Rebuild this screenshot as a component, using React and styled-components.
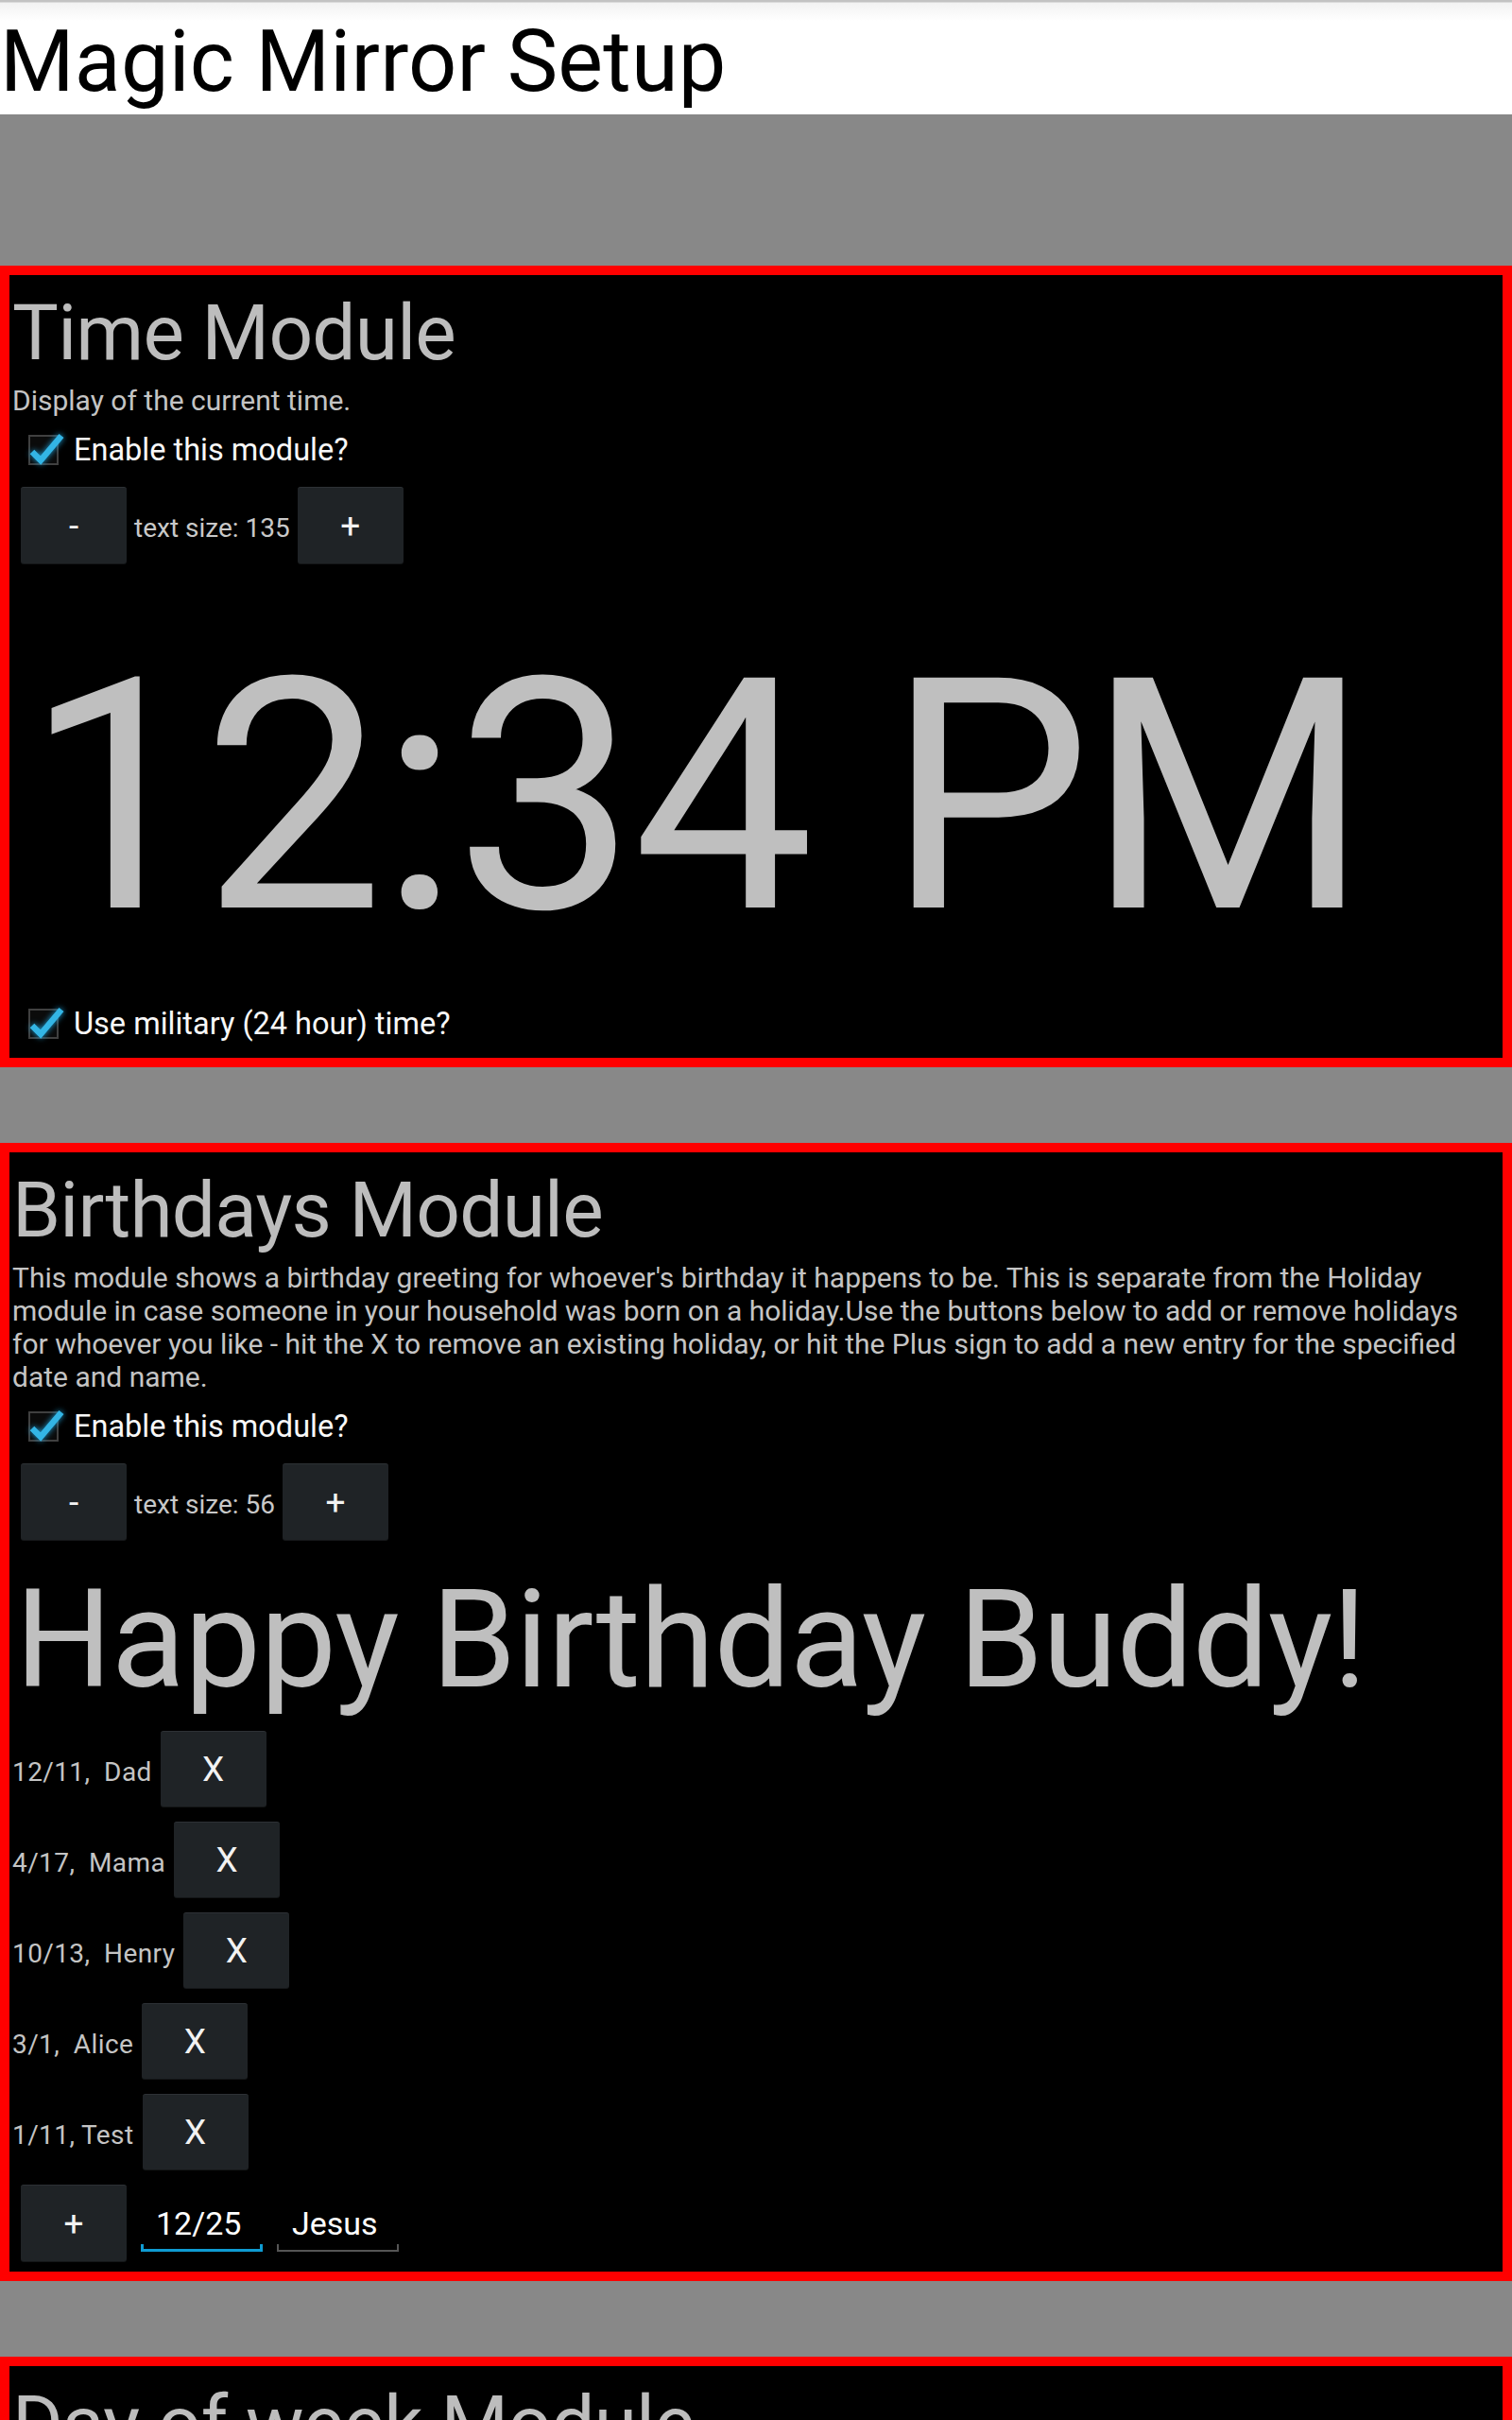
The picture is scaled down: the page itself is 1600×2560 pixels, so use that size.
import React, { useState } from "react";
import styled, { createGlobalStyle } from "styled-components";

const birthdays = [
  { date: "12/11", name: "Dad", sep: ",  " },
  { date: "4/17", name: "Mama", sep: ",  " },
  { date: "10/13", name: "Henry", sep: ",  " },
  { date: "3/1", name: "Alice", sep: ",  " },
  { date: "1/11", name: "Test", sep: ", " },
];

const GlobalStyle = createGlobalStyle`
  body {
    margin: 0;
    background: #888888;
    font-family: Roboto, "Noto Sans", sans-serif;
  }
`;

const Header = styled.header`
  height: 121px;
  box-sizing: border-box;
  padding-top: 13px;
  background: linear-gradient(#c2c2c2 0, #c2c2c2 2px, #f2f2f2 3px, #ffffff 22px);
`;

const Heading = styled.h1`
  margin: 0;
  font-size: 90px;
  font-weight: 400;
  line-height: normal;
  letter-spacing: 0.2px;
  color: #000;
`;

const Main = styled.main`
  display: flex;
  flex-direction: column;
  gap: 80px;
  padding-top: 160px;
`;

const Module = styled.section`
  border: 10px solid #ff0000;
  background: #000;
  padding: 0 3px ${(p) => p.$padBottom || 0}px;
`;

const Title = styled.h2`
  margin: 13px 0 0;
  font-size: 82px;
  font-weight: 400;
  line-height: normal;
  letter-spacing: -0.8px;
  color: #bdbdbd;
`;

const Desc = styled.p`
  margin: 6px 0 0;
  font-size: 30px;
  line-height: normal;
  color: #c4c4c4;
`;

const CheckRow = styled.label`
  display: flex;
  align-items: center;
  gap: 16px;
  margin-top: ${(p) => p.$mt}px;
  padding-left: 17px;
  font-size: 32.5px;
  line-height: normal;
  color: #f8f8f8;
`;

const CheckIcon = styled.svg`
  width: 32px;
  height: 32px;
  overflow: visible;
  flex: none;
`;

const ButtonRow = styled.div`
  display: flex;
  align-items: center;
  gap: ${(p) => p.$gap || 8}px;
  margin-top: ${(p) => p.$mt || 0}px;
  padding-left: 9px;
`;

const Button = styled.button`
  width: 112px;
  height: ${(p) => p.$h || 81}px;
  padding: 0;
  border: none;
  border-top: 1px solid #2d3135;
  border-radius: 3px;
  background: #1f2326;
  box-shadow: 0 1px 0 #141618;
  color: #f2f2f2;
  font-family: Roboto, sans-serif;
  font-size: 37px;
  flex: none;
`;

const SizeLabel = styled.span`
  padding-top: 6px;
  font-size: 28px;
  color: #c8c8c8;
`;

const Clock = styled.div`
  margin-top: 47px;
  padding-left: 13px;
  font-size: 342px;
  line-height: normal;
  letter-spacing: -4px;
  white-space: nowrap;
  color: #bfbfbf;
`;

const Greeting = styled.div`
  margin-top: 21px;
  padding-left: 3px;
  font-size: 144px;
  line-height: normal;
  letter-spacing: -0.9px;
  white-space: nowrap;
  color: #bfbfbf;
`;

const List = styled.div`
  display: flex;
  flex-direction: column;
  gap: 16px;
  margin-top: 12px;
`;

const Entry = styled.div`
  display: flex;
  align-items: center;
  gap: 9px;
`;

const EntryLabel = styled.span`
  padding-top: 6px;
  font-size: 28px;
  letter-spacing: 0.4px;
  white-space: pre;
  color: #c4c4c4;
`;

const Field = styled.input`
  width: 129px;
  height: 61px;
  box-sizing: border-box;
  padding: 0 0 0 16px;
  border: none;
  outline: none;
  font-family: Roboto, sans-serif;
  font-size: 34px;
  color: #fff;
  background:
    linear-gradient(${(p) => p.$line}, ${(p) => p.$line}) left bottom / 100% ${(p) => (p.$active ? 3 : 2)}px no-repeat,
    linear-gradient(${(p) => p.$line}, ${(p) => p.$line}) left bottom / ${(p) => (p.$active ? 3 : 2)}px 8px no-repeat,
    linear-gradient(${(p) => p.$line}, ${(p) => p.$line}) right bottom / ${(p) => (p.$active ? 3 : 2)}px 8px no-repeat,
    transparent;
`;

function Check({ label, mt }) {
  return (
    <CheckRow $mt={mt}>
      <CheckIcon viewBox="0 0 32 32">
        <rect x="1" y="1" width="30" height="30" fill="#0b0b0b" stroke="#404040" strokeWidth="2" />
        <path
          d="M4 18 L13 27 L35 1"
          fill="none"
          stroke="#33b5e5"
          strokeWidth="6.5"
          style={{ filter: "drop-shadow(0 0 3px #1e9fd6)" }}
        />
      </CheckIcon>
      <span>{label}</span>
    </CheckRow>
  );
}

function SizeControl({ size }) {
  return (
    <ButtonRow $mt={20}>
      <Button>-</Button>
      <SizeLabel>text size: {size}</SizeLabel>
      <Button>+</Button>
    </ButtonRow>
  );
}

export default function App() {
  const [date, setDate] = useState("12/25");
  const [name, setName] = useState("Jesus");

  return (
    <>
      <GlobalStyle />
      <Header>
        <Heading>Magic Mirror Setup</Heading>
      </Header>
      <Main>
        <Module $padBottom={17}>
          <Title>Time Module</Title>
          <Desc>Display of the current time.</Desc>
          <Check label="Enable this module?" mt={16} />
          <SizeControl size={135} />
          <Clock>12:34 PM</Clock>
          <Check label="Use military (24 hour) time?" mt={21} />
        </Module>

        <Module $padBottom={11}>
          <Title>Birthdays Module</Title>
          <Desc>
            This module shows a birthday greeting for whoever's birthday it happens to be. This is
            separate from the Holiday module in case someone in your household was born on a
            holiday.Use the buttons below to add or remove holidays for whoever you like - hit the X
            to remove an existing holiday, or hit the Plus sign to add a new entry for the specified
            date and name.
          </Desc>
          <Check label="Enable this module?" mt={16} />
          <SizeControl size={56} />
          <Greeting>Happy Birthday Buddy!</Greeting>
          <List>
            {birthdays.map((b) => (
              <Entry key={b.date}>
                <EntryLabel>
                  {b.date}
                  {b.sep}
                  {b.name}
                </EntryLabel>
                <Button $h={80}>X</Button>
              </Entry>
            ))}
            <ButtonRow $gap={15}>
              <Button>+</Button>
              <Field $active $line="#0f9bd2" value={date} onChange={(e) => setDate(e.target.value)} />
              <Field $line="#555555" value={name} onChange={(e) => setName(e.target.value)} />
            </ButtonRow>
          </List>
        </Module>

        <Module $padBottom={17}>
          <Title>Day of week Module</Title>
          <Desc>Display of the current day of the week.</Desc>
          <Check label="Enable this module?" mt={16} />
          <SizeControl size={56} />
        </Module>
      </Main>
    </>
  );
}
